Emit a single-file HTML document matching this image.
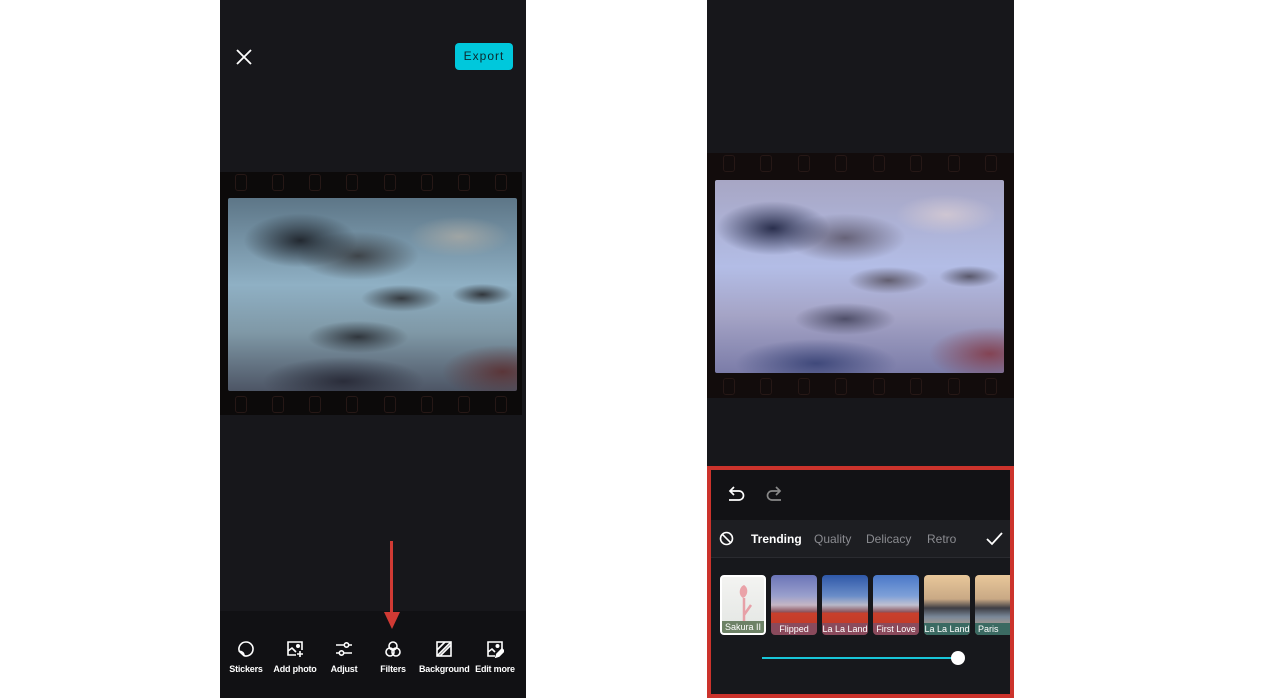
<!DOCTYPE html>
<html><head><meta charset="utf-8"><style>
*{margin:0;padding:0;box-sizing:border-box}
body{width:1280px;height:698px;background:#fff;position:relative;overflow:hidden;font-family:"Liberation Sans",Arial,sans-serif}
.abs{position:absolute}
.phone{background:#17171b}
.strip{background:#0c0a0a}
.sky1{background:
radial-gradient(ellipse 28% 20% at 25% 22%,rgba(30,35,42,.95),transparent 70%),
radial-gradient(ellipse 30% 18% at 45% 30%,rgba(55,58,62,.9),transparent 70%),
radial-gradient(ellipse 20% 10% at 60% 52%,rgba(45,48,52,.9),transparent 70%),
radial-gradient(ellipse 15% 8% at 88% 50%,rgba(40,42,46,.9),transparent 70%),
radial-gradient(ellipse 25% 12% at 45% 72%,rgba(40,44,50,.9),transparent 70%),
radial-gradient(ellipse 40% 18% at 40% 95%,rgba(40,42,55,.95),transparent 70%),
radial-gradient(ellipse 30% 20% at 95% 90%,rgba(90,40,40,.8),transparent 70%),
radial-gradient(ellipse 25% 15% at 80% 20%,rgba(170,170,165,.8),transparent 70%),
linear-gradient(180deg,#5d7687,#8fb0c4 45%,#7f98a6 70%,#4d5565)}
.sky2{background:
radial-gradient(ellipse 28% 20% at 20% 25%,rgba(35,40,70,.95),transparent 70%),
radial-gradient(ellipse 30% 18% at 45% 30%,rgba(95,90,110,.9),transparent 70%),
radial-gradient(ellipse 20% 10% at 60% 52%,rgba(90,85,100,.9),transparent 70%),
radial-gradient(ellipse 15% 8% at 88% 50%,rgba(80,78,95,.9),transparent 70%),
radial-gradient(ellipse 25% 12% at 45% 72%,rgba(70,70,95,.9),transparent 70%),
radial-gradient(ellipse 40% 18% at 35% 95%,rgba(60,70,120,.95),transparent 70%),
radial-gradient(ellipse 30% 20% at 95% 90%,rgba(130,50,60,.8),transparent 70%),
radial-gradient(ellipse 25% 15% at 80% 18%,rgba(210,200,210,.9),transparent 70%),
linear-gradient(180deg,#a7a6c4,#b3bde6 45%,#a5a4c6 70%,#7b7ca8)}
.holes{display:flex;justify-content:space-around}
.holes i{display:block;width:12px;height:17px;border:1px solid #261816;border-radius:3px}
.tb{position:absolute;top:640px;width:50px;text-align:center;color:#fff;font-size:9px;font-weight:bold;letter-spacing:-0.2px}
.tb svg{display:block;margin:0 auto 6px}
.th{position:absolute;top:575px;width:46px;height:60px;border-radius:4px;overflow:hidden}
.th span{position:absolute;bottom:0;left:0;right:0;height:12px;font-size:9px;color:#fff;text-align:center;line-height:12px}
.car{background:linear-gradient(180deg,#6b74b8 0,#9aa0cc 35%,#c5b6c4 50%,#8b5058 62%,#c9402c 63%,#c33a28 85%,#2a2226 86%)}
.city{background:linear-gradient(180deg,#e8c79a 0,#c9a985 40%,#3e3e44 55%,#7a8899 70%,#a89c90 85%)}
.tab{position:absolute;top:532px;font-size:12px;color:#8a8b90}
</style></head><body>

<div class="abs phone" style="left:220px;top:0;width:306px;height:698px"></div>
<div class="abs" style="left:220px;top:611px;width:306px;height:87px;background:#111114"></div>
<svg class="abs" style="left:235px;top:48px" width="18" height="18" viewBox="0 0 18 18"><path d="M2 2L16 16M16 2L2 16" stroke="#fff" stroke-width="1.8"/></svg>
<div class="abs" style="left:455px;top:43px;width:58px;height:27px;background:#00c8dc;border-radius:4px;color:#0b2a30;font-size:12px;letter-spacing:1px;text-align:center;line-height:27px">Export</div>
<div class="abs strip" style="left:220px;top:172px;width:302px;height:243px"></div>
<div class="abs holes" style="left:222px;top:174px;width:298px"><i></i><i></i><i></i><i></i><i></i><i></i><i></i><i></i></div>
<div class="abs holes" style="left:222px;top:396px;width:298px"><i></i><i></i><i></i><i></i><i></i><i></i><i></i><i></i></div>
<div class="abs sky1" style="left:228px;top:198px;width:289px;height:193px;border-radius:2px"></div>
<div class="abs" style="left:390px;top:541px;width:3px;height:75px;background:#d03a34"></div>
<svg class="abs" style="left:384px;top:612px" width="16" height="17"><path d="M0 0H16L8 17Z" fill="#d03a34"/></svg>

<div class="tb" style="left:221px"><svg width="18" height="18" viewBox="0 0 18 18" fill="none" stroke="#fff" stroke-width="1.6"><path d="M9 2a7 7 0 1 1-2 13.7C5 14 3.7 12.5 2.3 11.3A7 7 0 0 1 9 2z"/><path d="M2.3 11.3c2 0 4.7 1 4.7 4.4"/></svg>Stickers</div>
<div class="tb" style="left:270px"><svg width="18" height="18" viewBox="0 0 18 18" fill="none" stroke="#fff" stroke-width="1.6"><path d="M10 15H2V2h14v8"/><path d="M2 11l4-3 4 4"/><circle cx="12" cy="6" r="1.2" fill="#fff"/><path d="M14 11v6M11 14h6"/></svg>Add photo</div>
<div class="tb" style="left:319px"><svg width="18" height="18" viewBox="0 0 18 18" fill="none" stroke="#fff" stroke-width="1.6"><path d="M1 5h8M14 5h3M1 13h3M9 13h8"/><circle cx="11.5" cy="5" r="2.2"/><circle cx="6.5" cy="13" r="2.2"/></svg>Adjust</div>
<div class="tb" style="left:368px"><svg width="18" height="18" viewBox="0 0 18 18" fill="none" stroke="#fff" stroke-width="1.6"><circle cx="9" cy="6" r="4"/><circle cx="6" cy="12" r="4"/><circle cx="12" cy="12" r="4"/></svg>Filters</div>
<div class="tb" style="left:419px"><svg width="18" height="18" viewBox="0 0 18 18" fill="none" stroke="#fff" stroke-width="1.6"><rect x="2" y="2" width="14" height="14"/><path d="M2 10L10 2M5 16L16 5M2 16L16 2"/></svg>Background</div>
<div class="tb" style="left:470px"><svg width="18" height="18" viewBox="0 0 18 18" fill="none" stroke="#fff" stroke-width="1.6"><path d="M9 16H2V2h14v7"/><path d="M2 12l4-3 3 3"/><circle cx="11.5" cy="6" r="1.2" fill="#fff"/><path d="M10 17l1-3 5-5 2 2-5 5z" fill="#fff"/></svg>Edit more</div>

<div class="abs phone" style="left:707px;top:0;width:307px;height:698px"></div>
<div class="abs strip" style="left:707px;top:153px;width:307px;height:245px;background:#120c0c"></div>
<div class="abs holes" style="left:710px;top:155px;width:300px"><i></i><i></i><i></i><i></i><i></i><i></i><i></i><i></i></div>
<div class="abs holes" style="left:710px;top:378px;width:300px"><i></i><i></i><i></i><i></i><i></i><i></i><i></i><i></i></div>
<div class="abs sky2" style="left:715px;top:180px;width:289px;height:193px;border-radius:2px"></div>

<div class="abs" style="left:707px;top:466px;width:307px;height:232px;background:#17181c;border:4px solid #cc332c"></div>
<div class="abs" style="left:711px;top:470px;width:299px;height:50px;background:#121215"></div>
<svg class="abs" style="left:727px;top:486px" width="18" height="16" viewBox="0 0 18 16" fill="none" stroke="#fff" stroke-width="1.7"><path d="M4 5h8a4.5 4.5 0 0 1 0 9H2"/><path d="M7 1L3 5l4 4"/></svg>
<svg class="abs" style="left:765px;top:486px" width="18" height="16" viewBox="0 0 18 16" fill="none" stroke="#888" stroke-width="1.7"><path d="M14 5H7a4.5 4.5 0 0 0 0 9h9"/><path d="M11 1l4 4-4 4"/></svg>
<div class="abs" style="left:711px;top:520px;width:299px;height:38px;background:#1d1e22;border-bottom:1px solid #2a2b30"></div>
<svg class="abs" style="left:719px;top:531px" width="15" height="15" viewBox="0 0 15 15" fill="none" stroke="#fff" stroke-width="1.6"><circle cx="7.5" cy="7.5" r="6"/><path d="M3.3 3.3l8.4 8.4"/></svg>
<div class="tab" style="left:751px;color:#fff;font-weight:bold">Trending</div>
<div class="tab" style="left:814px">Quality</div>
<div class="tab" style="left:866px">Delicacy</div>
<div class="tab" style="left:927px">Retro</div>
<svg class="abs" style="left:986px;top:532px" width="17" height="14" viewBox="0 0 17 14" fill="none" stroke="#fff" stroke-width="1.8"><path d="M1 7l5 5L16 1"/></svg>

<div class="th" style="left:720px;border:2px solid #fff;background:linear-gradient(180deg,#f3f3f1,#e3e6e3)"><svg class="abs" style="left:10px;top:6px" width="24" height="42"><path d="M12 2c-5 2-6 10-1 13 5-2 6-10 1-13z" fill="#eaa2a8"/><path d="M12 15v27M12 32l7-10" stroke="#e7a0a7" stroke-width="2.5"/></svg><span style="background:#6d8266">Sakura II</span></div>
<div class="th car" style="left:771px"><span style="background:#8a4a5c">Flipped</span></div>
<div class="th car" style="left:822px;background:linear-gradient(180deg,#2f58a8 0,#6a8dc8 35%,#b8b8c8 50%,#8b5058 62%,#c9402c 63%,#c33a28 85%,#2a2226 86%)"><span style="background:#8a4a5c">La La Land</span></div>
<div class="th car" style="left:873px;background:linear-gradient(180deg,#4a78c8 0,#7ea0d8 35%,#c0c0d0 50%,#8b5058 62%,#c9402c 63%,#c33a28 85%,#2a2226 86%)"><span style="background:#8a4a5c">First Love</span></div>
<div class="th city" style="left:924px"><span style="background:#3b6a62">La La Land</span></div>
<div class="th city" style="left:975px;width:35px;border-radius:4px 0 0 4px"><span style="background:#3b6a62;text-align:left;padding-left:3px">Paris</span></div>

<div class="abs" style="left:762px;top:657px;width:196px;height:2px;background:#18c6d8"></div>
<div class="abs" style="left:951px;top:651px;width:14px;height:14px;border-radius:50%;background:#fff"></div>
</body></html>
